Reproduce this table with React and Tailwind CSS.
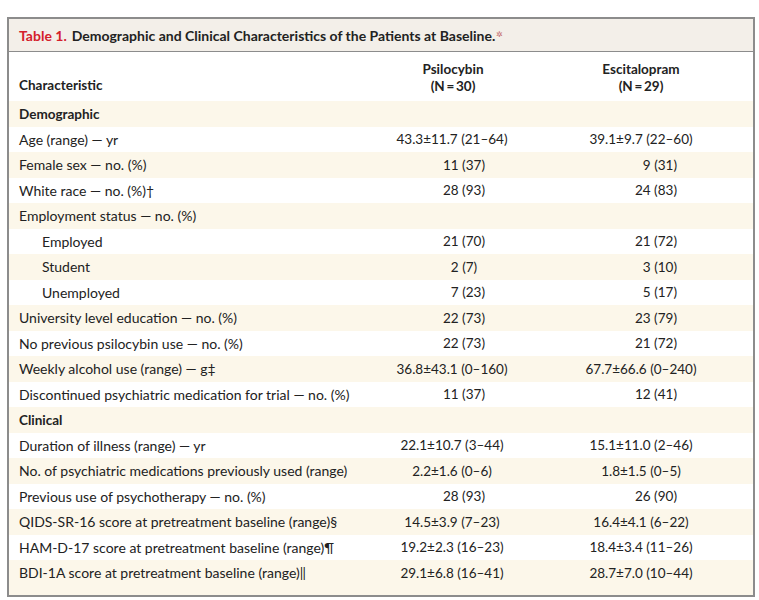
import React from 'react'

const rows = [
  { label: 'Demographic', section: true },
  { label: 'Age (range) — yr', a: '43.3±11.7 (21–64)', b: '39.1±9.7 (22–60)', range: true },
  { label: 'Female sex — no. (%)', a: '11 (37)', b: '9 (31)' },
  { label: 'White race — no. (%)†', a: '28 (93)', b: '24 (83)' },
  { label: 'Employment status — no. (%)' },
  { label: 'Employed', indent: true, a: '21 (70)', b: '21 (72)' },
  { label: 'Student', indent: true, a: '2 (7)\u2007', b: '3 (10)' },
  { label: 'Unemployed', indent: true, a: '7 (23)', b: '5 (17)' },
  { label: 'University level education — no. (%)', a: '22 (73)', b: '23 (79)' },
  { label: 'No previous psilocybin use — no. (%)', a: '22 (73)', b: '21 (72)' },
  { label: 'Weekly alcohol use (range) — g‡', a: '36.8±43.1 (0–160)', b: '67.7±66.6 (0–240)', range: true },
  { label: 'Discontinued psychiatric medication for trial — no. (%)', a: '11 (37)', b: '12 (41)' },
  { label: 'Clinical', section: true },
  { label: 'Duration of illness (range) — yr', a: '22.1±10.7 (3–44)', b: '15.1±11.0 (2–46)', range: true },
  { label: 'No. of psychiatric medications previously used (range)', a: '2.2±1.6 (0–6)', b: '1.8±1.5 (0–5)', range: true },
  { label: 'Previous use of psychotherapy — no. (%)', a: '28 (93)', b: '26 (90)' },
  { label: 'QIDS-SR-16 score at pretreatment baseline (range)§', a: '14.5±3.9 (7–23)', b: '16.4±4.1 (6–22)', range: true },
  { label: 'HAM-D-17 score at pretreatment baseline (range)¶', a: '19.2±2.3 (16–23)', b: '18.4±3.4 (11–26)', range: true },
  { label: 'BDI-1A score at pretreatment baseline (range)‖', a: '29.1±6.8 (16–41)', b: '28.7±7.0 (10–44)', range: true },
]

const Row = ({ row, index, last }) => {
  const bg = index % 2 === 0 ? 'bg-[#fcf7ea]' : 'bg-white'
  return (
    <div className={`grid grid-cols-[350px_188px_188px] ${bg} ${last ? 'h-[34.5px] pb-[9px]' : 'h-[25.5px]'}`}>
      <div
        className={`flex items-center ${row.indent ? 'pl-[33px]' : 'pl-[10px]'} ${row.section ? 'font-bold text-[13.5px]' : 'text-[14px]'} whitespace-nowrap`}
      >
        {row.label}
      </div>
      <div className={`flex items-center ${row.range ? 'justify-center pr-[2px]' : 'justify-end pr-[62px]'} whitespace-nowrap`}>
        {row.a}
      </div>
      <div className={`flex items-center ${row.range ? 'justify-center' : 'justify-end pr-[58px]'} whitespace-nowrap`}>
        {row.b}
      </div>
    </div>
  )
}

export default function App() {
  return (
    <div className="bg-white w-[759px] h-[600px] pt-[17px] pl-[7px] font-['Lato',sans-serif] text-[#222] text-[13.5px]">
      <div className="w-[748px] border-2 border-[#8c8c8c]">
        <div className="h-[33px] bg-[#f3efe9] border-b border-[#8c8c8c] flex items-center pl-[10px] text-[14px] font-bold whitespace-nowrap">
          <span className="text-[#d4202b]">Table 1.</span>
          <span className="ml-[5px]">Demographic and Clinical Characteristics of the Patients at Baseline.</span>
          <span className="text-[8px] font-normal text-[#c46a6e] self-start mt-[9px] ml-[1px]">✲</span>
        </div>
        <div className="grid grid-cols-[350px_188px_188px] h-[49px] font-bold bg-white">
          <div className="flex items-end pl-[10px] pb-[6px]">Characteristic</div>
          <div className="flex flex-col items-center justify-end pb-[6px] leading-[17px]">
            <span>Psilocybin</span>
            <span>(N{'\u2009'}={'\u2009'}30)</span>
          </div>
          <div className="flex flex-col items-center justify-end pb-[6px] leading-[17px]">
            <span>Escitalopram</span>
            <span>(N{'\u2009'}={'\u2009'}29)</span>
          </div>
        </div>
        {rows.map((row, i) => (
          <Row key={i} row={row} index={i} last={i === rows.length - 1} />
        ))}
      </div>
    </div>
  )
}
